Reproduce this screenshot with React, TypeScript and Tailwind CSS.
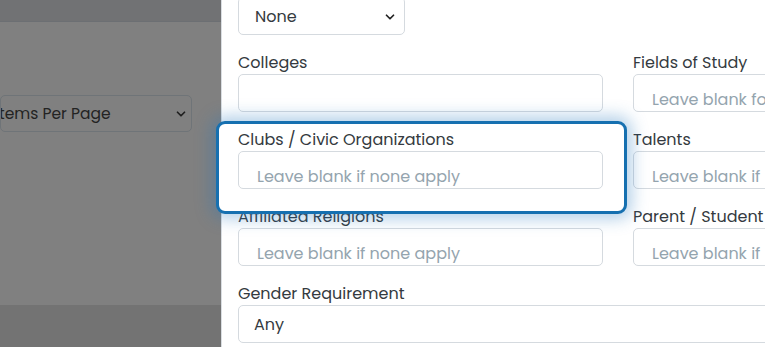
import { ChevronDown } from 'lucide-react';

const font = { fontFamily: 'Poppins, Inter, "Noto Sans", sans-serif' };

const Field = ({ label, placeholder, raised }: { label: string; placeholder?: string; raised?: boolean }) => (
  <div className={raised ? 'relative z-20' : ''}>
    <div className="h-[22px] mb-[2px] text-[16px] leading-[25px] text-[#343a40] whitespace-nowrap">{label}</div>
    <div className="h-[38px] border border-[#d5dadf] rounded-[5px] bg-white pl-[18px] pt-[13px] flex items-center text-[16px] text-[#94a4ae] whitespace-nowrap overflow-hidden">
      {placeholder}
    </div>
  </div>
);

const App = () => {
  return (
    <div className="w-[765px] h-[347px] overflow-hidden flex relative bg-white" style={font}>
      {/* backdrop over the page */}
      <div className="w-[221px] shrink-0 flex flex-col bg-[#808080]">
        <div className="h-[22px] bg-[#717274] border-b border-[#6c6f73]" />
        <div className="flex-1 overflow-hidden">
          <div className="mt-[73px] w-[192px] h-[37px] border border-[#6f7478] rounded-[5px] flex items-center justify-between pr-[3px] overflow-hidden">
            <span className="ml-[-2px] text-[15.5px] text-[#232323] whitespace-nowrap">tems Per Page</span>
            <ChevronDown className="w-[14px] h-[14px] text-[#1f1f1f]" strokeWidth={3} />
          </div>
        </div>
        <div className="h-[42px] bg-[#737373]" />
      </div>

      {/* side panel */}
      <div className="flex-1 border-l border-[#d9dde1] overflow-hidden">
        <div className="pl-[16px] mt-[-3px] w-[800px]">
          <div className="w-[167px] h-[38px] border border-[#d5dadf] rounded-[5px] flex items-center justify-between pl-[16px] pr-[7px] pt-[1px] text-[16px] text-[#343a40]">
            <span>None</span>
            <ChevronDown className="w-[14px] h-[14px] text-[#222]" strokeWidth={3} />
          </div>

          <div className="mt-[15px] grid grid-cols-[365px_365px] gap-x-[30px] gap-y-[15px]">
            <Field label="Colleges" />
            <Field label="Fields of Study" placeholder="Leave blank for all" />
            <Field label="Clubs / Civic Organizations" placeholder="Leave blank if none apply" raised />
            <Field label="Talents" placeholder="Leave blank if none apply" />
            <Field label="Affiliated Religions" placeholder="Leave blank if none apply" />
            <Field label="Parent / Student Affiliations" placeholder="Leave blank if none apply" />
            <div className="col-span-2">
              <div className="h-[22px] mb-[2px] text-[16px] leading-[25px] text-[#343a40]">Gender Requirement</div>
              <div className="h-[38px] border border-[#d5dadf] rounded-[5px] pl-[15px] pt-[1px] flex items-center text-[16px] text-[#343a40]">Any</div>
            </div>
          </div>
        </div>
      </div>

      {/* tour highlight */}
      <div className="absolute z-10 left-[216px] top-[121px] w-[411px] h-[93px] bg-white border-[3px] border-[#1670b0] rounded-[9px] shadow-[0_0_16px_5px_rgba(40,120,190,0.35)]" />
    </div>
  );
};

export default App;
